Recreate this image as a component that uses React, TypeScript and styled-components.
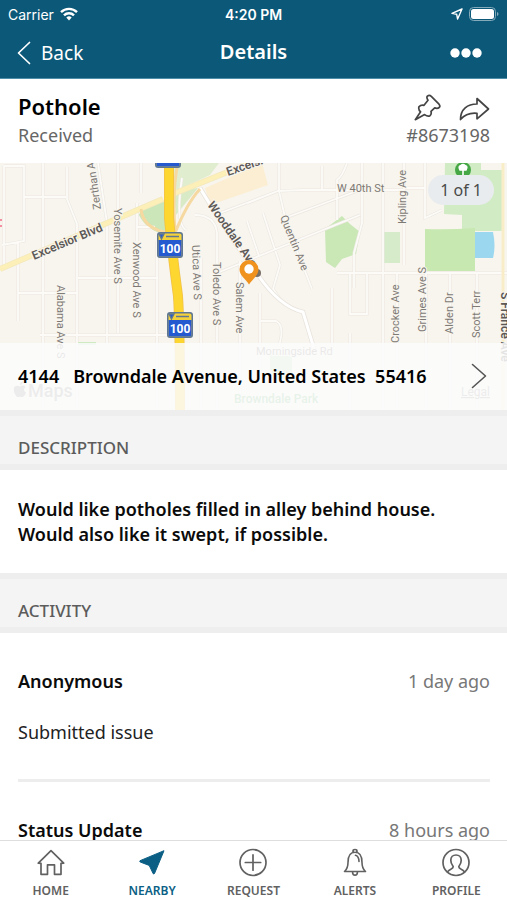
import React from "react";
import styled, { createGlobalStyle, css } from "styled-components";

const GlobalStyle = createGlobalStyle`
  *, *::before, *::after { box-sizing: border-box; }
  html, body, #root { height: 100%; }
  body { margin: 0; background: #fff; font-family: "Noto Sans", sans-serif; color: #0b0b0b; }
  button { font: inherit; color: inherit; background: none; border: 0; padding: 0; cursor: pointer; }
  h1, h2, h3, p, ul { margin: 0; padding: 0; font: inherit; }
  svg { display: block; }
`;

const Screen = styled.div`
  display: flex;
  flex-direction: column;
  height: 100vh;
  overflow: hidden;
`;

const Header = styled.header`
  flex: none;
  background: #0b5878;
  color: #fff;
  border-bottom: 1px solid #4f8ea8;
`;

const StatusBar = styled.div`
  display: grid;
  grid-template-columns: 1fr auto 1fr;
  align-items: center;
  height: 28px;
  padding: 0 8px;
  font-family: Inter, sans-serif;
  font-size: 14px;
`;

const StatusGroup = styled.div<{ $end?: boolean }>`
  display: flex;
  align-items: center;
  gap: 6px;
  justify-content: ${(p) => (p.$end ? "flex-end" : "flex-start")};
`;

const Clock = styled.time`
  font-weight: 600;
`;

const NavBar = styled.nav`
  display: grid;
  grid-template-columns: 1fr auto 1fr;
  align-items: center;
  height: 50px;
  padding: 0 17px;
`;

const BackButton = styled.button`
  display: flex;
  align-items: center;
  justify-self: start;
  gap: 10px;
  font-size: 19px;
`;

const NavTitle = styled.h1`
  font-size: 20px;
  font-weight: 600;
  line-height: 24px;
  padding-bottom: 2px;
`;

const MoreButton = styled.button`
  justify-self: end;
  padding: 0 8px;
`;

const Content = styled.main`
  flex: 1;
  min-height: 0;
  overflow-y: auto;
  scrollbar-width: none;
`;

const Summary = styled.section`
  display: flex;
  justify-content: space-between;
  padding: 12px 17px 13px 18px;
`;

const SummaryColumn = styled.div<{ $end?: boolean }>`
  display: flex;
  flex-direction: column;
  align-items: ${(p) => (p.$end ? "flex-end" : "flex-start")};
`;

const IssueTitle = styled.h2`
  font-size: 22px;
  font-weight: 600;
  line-height: 30px;
  color: #000;
`;

const Muted = styled.p`
  font-size: 18px;
  line-height: 29px;
  color: #666;
`;

const Actions = styled.div`
  display: flex;
  align-items: flex-end;
  gap: 18px;
  height: 30px;
`;

const MapPanel = styled.section`
  position: relative;
  height: 247px;
  overflow: hidden;
  background: #f8f5ee;
`;

const MapDrawing = styled.svg`
  width: 100%;
  height: 100%;
  font-family: Roboto, sans-serif;
`;

const CountBadge = styled.span`
  position: absolute;
  top: 12px;
  right: 13px;
  padding: 0 12px;
  border-radius: 15px;
  background: #e9ecee;
  color: #4a4a4a;
  font-size: 16px;
  line-height: 30px;
`;

const AddressButton = styled.button`
  position: absolute;
  left: 0;
  right: 0;
  bottom: 0;
  display: flex;
  align-items: center;
  justify-content: space-between;
  height: 67px;
  padding: 0 20px 2px 18px;
  background: rgba(252, 252, 252, 0.86);
  color: #000;
  font-size: 18px;
  font-weight: 600;
`;

const AddressText = styled.span`
  white-space: pre;
`;

const SectionTitle = styled.h2`
  height: 60px;
  padding: 17px 18px 0;
  border: solid #eeeeee;
  border-width: 6px 0;
  background: #f4f4f4;
  color: #5c5c5c;
  font-size: 17px;
  font-weight: 500;
  line-height: 30px;
`;

const Description = styled.p`
  padding: 27px 18px 26px;
  font-size: 18px;
  font-weight: 600;
  line-height: 25px;
  white-space: pre-line;
`;

const ActivityList = styled.ul`
  list-style: none;
  padding: 0 17px 0 18px;
`;

const ActivityItem = styled.li`
  padding: 34px 0;
  border-bottom: 3px solid #ededed;
`;

const ActivityHead = styled.div`
  display: flex;
  justify-content: space-between;
  align-items: center;
  line-height: 28px;
  margin-bottom: 24px;
`;

const Author = styled.h3`
  font-size: 18px;
  font-weight: 600;
`;

const When = styled.time`
  font-size: 18px;
  color: #777;
`;

const ActivityText = styled.p`
  font-size: 18px;
  line-height: 26px;
  color: #222;
`;

const TabBar = styled.nav`
  flex: none;
  display: grid;
  grid-template-columns: repeat(5, 1fr);
  height: 60px;
  border-top: 1px solid #dedede;
  background: #fff;
`;

const Tab = styled.button<{ $active?: boolean }>`
  display: flex;
  flex-direction: column;
  align-items: center;
  padding-top: 7px;
  gap: 5px;
  color: #616161;
  font-size: 12px;
  font-weight: 600;
  line-height: 18px;
  ${(p) => p.$active && css`color: #0b5f85;`}
`;

const lineProps = {
  fill: "none",
  stroke: "currentColor",
  strokeLinecap: "round" as const,
  strokeLinejoin: "round" as const,
};

const WifiIcon = () => (
  <svg width="18" height="14" viewBox="0 0 18 14" fill="none" stroke="#fff" strokeWidth="2.4" aria-hidden>
    <path d="M1 5.2a11.4 11.4 0 0 1 16 0M4 8.3a7.1 7.1 0 0 1 10 0" />
    <path d="M6.3 10.6a4 4 0 0 1 5.4 0L9 13.4z" fill="#fff" stroke="none" />
  </svg>
);

const LocationIcon = () => (
  <svg width="12" height="12" viewBox="0 0 12 12" {...lineProps} strokeWidth="1.4" aria-hidden>
    <path d="M11 1 1 5.4l4.700.9.9 4.700z" />
  </svg>
);

const BatteryIcon = () => (
  <svg width="30" height="15" viewBox="0 0 30 15" aria-hidden>
    <rect x="0.5" y="0.5" width="26" height="13" rx="4" fill="none" stroke="#85abbb" />
    <rect x="2" y="2" width="23" height="10" rx="2.5" fill="#fff" />
    <path d="M28 5v4q1.500-.6 1.500-2T28 5" fill="#85abbb" />
  </svg>
);

const BackIcon = () => (
  <svg width="14" height="24" viewBox="0 0 14 24" {...lineProps} strokeWidth="1.7" aria-hidden>
    <path d="M12.500 1.500 1.500 12l11 10.500" />
  </svg>
);

const MoreIcon = () => (
  <svg width="32" height="10" viewBox="0 0 32 10" fill="#fff" aria-hidden>
    <circle cx="5" cy="5" r="4.700" />
    <circle cx="16" cy="5" r="4.700" />
    <circle cx="27" cy="5" r="4.700" />
  </svg>
);

const PinIcon = () => (
  <svg width="27" height="27" viewBox="0 0 27 27" {...lineProps} strokeWidth="1.7" color="#444" aria-hidden>
    <path d="M1.300 25.700 6.600 17.800Q4.200 15.800 4.900 12.900 6.800 10.600 10 11.300L14 6.200Q12.200 3.500 13.400 2.100 15.300.5 17.300 2.300L25 10.200Q26.600 12.200 25.200 13.500 23.500 14.900 20.700 13.900L17 17.400Q17.800 20 16 21.700 13.800 23 10.600 20.600Z" />
  </svg>
);

const ShareIcon = () => (
  <svg width="31" height="24" viewBox="0 0 31 24" {...lineProps} strokeWidth="1.7" color="#444" aria-hidden>
    <path d="M1.500 22.500C1.500 12 8.500 7 18 7V1.500L29.500 12 18 21.800V16.300C10.500 15.600 5.500 17.800 1.500 22.500z" />
  </svg>
);

const ChevronIcon = () => (
  <svg width="16" height="28" viewBox="0 0 16 28" {...lineProps} strokeWidth="1.600" color="#555" aria-hidden>
    <path d="M1.500 2.500 14.500 14 1.500 25.500" />
  </svg>
);

const HomeIcon = () => (
  <svg width="30" height="29" viewBox="0 0 30 29" {...lineProps} strokeWidth="1.700" aria-hidden>
    <path d="M5 15.300 2.300 15.200 15 2.700 27.700 15.200 25 15.300V26.300H18.500V16.800H11.500V26.300H5z" />
  </svg>
);

const NearbyIcon = () => (
  <svg width="30" height="29" viewBox="0 0 30 29" fill="currentColor" stroke="currentColor" strokeLinejoin="round" aria-hidden>
    <path d="M27 2.700 3 12.700Q2.400 13.400 3.200 14l9 3.400 4 8.300q.8.800 1.300-.2z" />
  </svg>
);

const RequestIcon = () => (
  <svg width="30" height="29" viewBox="0 0 30 29" {...lineProps} strokeWidth="1.700" aria-hidden>
    <circle cx="15" cy="14.500" r="13" />
    <path d="M15 6.800v15.400M7.300 14.500h15.400" />
  </svg>
);

const AlertsIcon = () => (
  <svg width="30" height="29" viewBox="0 0 30 29" {...lineProps} strokeWidth="1.600" aria-hidden>
    <path d="M13 4.200V3q0-1.500 2-1.500T17 3v1.200M4.500 23.500q3.500-3 3.500-9C8 8 10 4.300 15 4.300S22 8 22 14.500q0 6 3.500 9zM12.500 23.800q0 3.400 2.500 3.400t2.500-3.400M15.500 7.300q3.300.7 3.500 6.200" />
  </svg>
);

const ProfileIcon = () => (
  <svg width="30" height="29" viewBox="0 0 30 29" {...lineProps} strokeWidth="1.700" aria-hidden>
    <circle cx="15" cy="14.500" r="13" />
    <path d="M6.500 24c1.200-3.200 5.700-2.600 5.700-5.200 0-1.200-2.400-2.500-2.400-6.500 0-3.200 2.200-5.300 5.200-5.300s5.200 2.100 5.200 5.300c0 4-2.400 5.300-2.400 6.500 0 2.600 4.500 2 5.700 5.200" />
  </svg>
);

const HighwayShield = ({ x, y }: { x: number; y: number }) => (
  <g transform={`translate(${x} ${y})`}>
    <rect x="-13" y="-13" width="26" height="26" rx="3" fill="#5f7791" />
    <rect x="-11.500" y="-11.500" width="23" height="23" rx="2" fill="#f3d13b" />
    <path d="M-11.500-5h23V9.500q0 2-2 2h-19q-2 0-2-2z" fill="#2459cf" />
    <path d="M-11-11h5l-2.500 5zM-4-8.500H9" stroke="#5f7791" strokeWidth="1.400" fill="#2459cf" />
    <text y="7.500" textAnchor="middle" fontSize="12" fontWeight="700" fill="#fff">100</text>
  </g>
);

type Label = { text: string; x: number; y: number; angle: number; bold?: boolean };

const streetLabels: Label[] = [
  { text: "Excelsior Blvd", x: 34, y: 97, angle: -23, bold: true },
  { text: "Excelsior Blvd", x: 228, y: 13, angle: -19, bold: true },
  { text: "Wooddale Ave", x: 207, y: 42, angle: 55, bold: true },
  { text: "Zerthan Ave", x: 101, y: 46, angle: -98 },
  { text: "Yosemite Ave S", x: 114, y: 45, angle: 90 },
  { text: "Xenwood Ave S", x: 133, y: 79, angle: 90 },
  { text: "Alabama Ave S", x: 57, y: 122, angle: 90 },
  { text: "Utica Ave S", x: 192, y: 82, angle: 88 },
  { text: "Toledo Ave S", x: 213, y: 99, angle: 90 },
  { text: "Salem Ave", x: 236, y: 119, angle: 90 },
  { text: "Quentin Ave", x: 280, y: 54, angle: 68 },
  { text: "W 40th St", x: 337, y: 29, angle: 0 },
  { text: "Kipling Ave", x: 406, y: 61, angle: -90 },
  { text: "Crocker Ave", x: 399, y: 180, angle: -90 },
  { text: "Grimes Ave S", x: 426, y: 169, angle: -90 },
  { text: "Alden Dr", x: 453, y: 171, angle: -90 },
  { text: "Scott Terr", x: 480, y: 175, angle: -90 },
  { text: "S France Ave", x: 501, y: 129, angle: 90, bold: true },
  { text: "Morningside Rd", x: 256, y: 192, angle: 0 },
];

const blocksWest =
  "M4 3h20v75L2 82M4 3v102M43 0v248M67 4v32l10 25v120M24 34h42M77 69v179M18 158v-80M18 130h60M78 115h80M40 172h140M98 0l9 60v120M118 0v170M141 0v30M137 40v38M157 78v170M137 64h18";
const blocksCentre =
  "M182 15q-7 45 4 52M195 52q20 0 22 18v178M215 52l63-24 25-1h100M279 0v28l8 35 25 63M285 55l80-30M217 110 360 52M247 58l12 35M263 50l17 52-7 24 10 14M240 98v150M201 95v153M322 3v24M278 28 248 40M260 130v80M261 158h15q9 4 3 25";
const blocksEast =
  "M347 0q-5 14-10 17v40M362 0v60l-8 30v35M383 0v248M404 0v102M425 0v55l17-8M404 25h21M337 110h170M426 108v140M450 111v137M477 111v137M397 111v137M367 111v40h-17v-40M350 170v78M332 125v60";
const sideStreets = `${blocksWest}${blocksCentre}${blocksEast}`;

const StreetMap = () => (
  <MapDrawing viewBox="0 0 507 247" preserveAspectRatio="xMidYMid slice" role="img" aria-label="Map of the reported location">
    <rect width="507" height="247" fill="#f8f5ee" />
    <path d="M205 25 262 0 268 22 210 42z" fill="#fbeed3" />
    <path d="M174 0h45l-9 12-26 12-10 4z" fill="#e0edcf" />
    <path d="M139 52q4-13 26-15v34q-18-3-26-19" fill="#cbe6b8" />
    <path d="M174 28l24-3-22 27z" fill="#d9ebc6" />
    <path d="M325 66l17-13 8 8 10 8-4 22-14 5-7 9-9-6z" fill="#c9e8b6" />
    <path d="M383 69h17v31h-17z" fill="#d6ebca" />
    <path d="M445 0h36v7h22v61H462V52l-18-1z" fill="#d1ebc5" />
    <g fill="none" stroke="#ebe7e0" strokeWidth="3">
      <path d={sideStreets} />
    </g>
    <g fill="none" stroke="#fcfbf8" strokeWidth="1.800">
      <path d={sideStreets} />
    </g>
    <path d="M425 66q23 1 50-1v43h-50z" fill="#c8e8b1" />
    <path d="M475 69h18q3 14 0 26h-18z" fill="#9bd7ef" />
    <path d="M78 179h18v3H78z" fill="#cfe9c2" />
    <path d="M270 190h22v26h-14l-8-9z" fill="#bfe5b8" />
    <path d="M200 25Q230 75 258 112q22 32 45 37l12 40" fill="none" stroke="#e8e3dc" strokeWidth="4.500" />
    <path d="M200 25Q230 75 258 112q22 32 45 37l12 40" fill="none" stroke="#fff" strokeWidth="3" />
    <path d="M503 0v248" stroke="#f9edc8" strokeWidth="3" />
    <g fill="none">
      <path d="M0 106 163 36M173 31 250 0" stroke="#f3e8bd" strokeWidth="6" />
      <path d="M0 106 163 36M173 31 250 0" stroke="#fcf0b8" strokeWidth="4.500" />
      <path d="M141 46q2 20 28 24M178 0q-6 25-3 70 12-30 25-44" stroke="#f5d9a1" strokeWidth="3" />
      <path d="M169 0V55q3 34 9 78 2 30 2 115" stroke="#f0c04a" strokeWidth="10" />
      <path d="M169 0V55q3 34 9 78 2 30 2 115" stroke="#fdd62f" strokeWidth="8.500" />
    </g>
    <g fill="#7d7975" stroke="#f8f5ee" strokeWidth="2" paintOrder="stroke">
      {streetLabels.map(({ text, x, y, angle, bold }) => (
        <text
          key={`${text}-${x}`}
          transform={`translate(${x} ${y}) rotate(${angle})`}
          fontSize={bold ? 12 : 11}
          fontWeight={bold ? 600 : 400}
          fill={bold ? "#5d5957" : undefined}
        >
          {text}
        </text>
      ))}
    </g>
    <path d="M0 57h2M0 63h2" stroke="#ef6f88" strokeWidth="1.500" />
    <HighwayShield x={168} y={-8} />
    <HighwayShield x={170} y={82} />
    <HighwayShield x={180} y={162} />
    <circle cx="463" cy="7" r="8" fill="#45a845" />
    <path d="M463 13V7m-3 0q-2-4 1-4.500 2-2 4 0 3 .5 1 4.500z" fill="#fff" stroke="#fff" strokeWidth="1.600" />
    <circle cx="257" cy="110" r="4" fill="#77716a" />
    <path d="M249 121.500C246.500 117 239.500 112.500 239.500 106.500a9.500 9.500 0 0 1 19 0c0 6-7 10.500-9.500 15z" fill="#f0921e" />
    <circle cx="249" cy="106" r="4.700" fill="#fff" />
    <text x="234" y="240" fontSize="12" fontWeight="500" fill="#6bb978">Browndale Park</text>
    <g fill="#8d8d8d">
      <path d="M20 223.500q-4-2-6 1-1 5 2.500 9 1.500 1 3.500 0 2 1 3.500 0 2-2 2.500-4-4-2.500-.5-5.500-2-2.500-5.500-.5m0-1.500q0-3 3-4 0 3-3 4" />
      <text x="28" y="234" fontSize="18" fontWeight="500">Maps</text>
      <text x="461" y="233" fontSize="12" textDecoration="underline">Legal</text>
    </g>
  </MapDrawing>
);

const tabs = [
  { label: "HOME", Icon: HomeIcon },
  { label: "NEARBY", Icon: NearbyIcon, active: true },
  { label: "REQUEST", Icon: RequestIcon },
  { label: "ALERTS", Icon: AlertsIcon },
  { label: "PROFILE", Icon: ProfileIcon },
];

const activity = [
  { author: "Anonymous", when: "1 day ago", text: "Submitted issue" },
  { author: "Status Update", when: "8 hours ago", text: "Received" },
];

export default function App() {
  return (
    <Screen>
      <GlobalStyle />
      <Header>
        <StatusBar>
          <StatusGroup>
            Carrier
            <WifiIcon />
          </StatusGroup>
          <Clock>4:20 PM</Clock>
          <StatusGroup $end>
            <LocationIcon />
            <BatteryIcon />
          </StatusGroup>
        </StatusBar>
        <NavBar>
          <BackButton type="button">
            <BackIcon />
            Back
          </BackButton>
          <NavTitle>Details</NavTitle>
          <MoreButton type="button" aria-label="More options">
            <MoreIcon />
          </MoreButton>
        </NavBar>
      </Header>
      <Content>
        <Summary>
          <SummaryColumn>
            <IssueTitle>Pothole</IssueTitle>
            <Muted>Received</Muted>
          </SummaryColumn>
          <SummaryColumn $end>
            <Actions>
              <button type="button" aria-label="Pin issue">
                <PinIcon />
              </button>
              <button type="button" aria-label="Share issue">
                <ShareIcon />
              </button>
            </Actions>
            <Muted>#8673198</Muted>
          </SummaryColumn>
        </Summary>
        <MapPanel>
          <StreetMap />
          <CountBadge>1 of 1</CountBadge>
          <AddressButton type="button">
            <AddressText>{"4144   Browndale Avenue, United States  55416"}</AddressText>
            <ChevronIcon />
          </AddressButton>
        </MapPanel>
        <SectionTitle>DESCRIPTION</SectionTitle>
        <Description>
          {"Would like potholes filled in alley behind house.\nWould also like it swept, if possible."}
        </Description>
        <SectionTitle>ACTIVITY</SectionTitle>
        <ActivityList>
          {activity.map((item) => (
            <ActivityItem key={item.author}>
              <ActivityHead>
                <Author>{item.author}</Author>
                <When>{item.when}</When>
              </ActivityHead>
              <ActivityText>{item.text}</ActivityText>
            </ActivityItem>
          ))}
        </ActivityList>
      </Content>
      <TabBar>
        {tabs.map(({ label, Icon, active }) => (
          <Tab key={label} type="button" $active={active} aria-current={active ? "page" : undefined}>
            <Icon />
            {label}
          </Tab>
        ))}
      </TabBar>
    </Screen>
  );
}
